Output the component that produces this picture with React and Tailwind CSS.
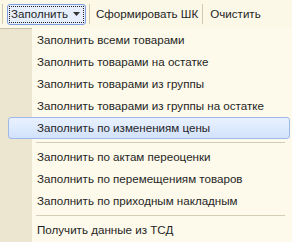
import React from 'react';

const groups = [
  [
    'Заполнить всеми товарами',
    'Заполнить товарами на остатке',
    'Заполнить товарами из группы',
    'Заполнить товарами из группы на остатке',
    'Заполнить по изменениям цены',
  ],
  [
    'Заполнить по актам переоценки',
    'Заполнить по перемещениям товаров',
    'Заполнить по приходным накладным',
  ],
  ['Получить данные из ТСД'],
];

const active = 'Заполнить по изменениям цены';

const Item = ({ label }) => {
  const isActive = label === active;
  return (
    <div className="relative flex h-[22px] items-center">
      <div className="h-full w-[32px] shrink-0 bg-[#ece6d1]" />
      {isActive && (
        <div className="absolute left-[8px] right-[2px] top-0 h-[22px] rounded-[3px] border border-[#9fb8ea] bg-gradient-to-b from-[#e9f1fe] to-[#d2e2fc]" />
      )}
      <span className="relative pl-[5px] text-[#1f1f1f]">{label}</span>
    </div>
  );
};

const Separator = () => (
  <div className="flex h-[7px]">
    <div className="h-full w-[32px] shrink-0 bg-[#ece6d1]" />
    <div className="flex flex-1 items-center pl-[4px] pr-[7px]">
      <div className="h-px w-full bg-[#d3cdb7]" />
    </div>
  </div>
);

export default function App() {
  return (
    <div
      className="h-[242px] w-[292px] overflow-hidden bg-[#fdfaeb] text-[11.6px] leading-none"
      style={{ fontFamily: '"Liberation Sans", Arial, sans-serif' }}
    >
      <div className="flex h-[28px] items-center bg-[#fbf8e8] pl-[2px]">
        <div className="h-[20px] w-px bg-[#cfc9b2]" />
        <div className="ml-[4px] flex h-[21px] items-center rounded-[3px] border border-[#7f9de0] bg-[#e8effc] px-[1px]">
          <div className="flex h-[17px] items-center gap-[5px] border border-dotted border-[#222] pl-[1px] pr-[3px] text-[#1f1f1f]">
            <span>Заполнить</span>
            <svg width="7" height="4" viewBox="0 0 7 4">
              <path d="M0 0h7L3.5 4z" fill="#333" />
            </svg>
          </div>
        </div>
        <div className="ml-[3px] h-[20px] w-px bg-[#cfc9b2]" />
        <span className="ml-[6px] text-[#1f1f1f]">Сформировать ШК</span>
        <div className="ml-[4px] h-[20px] w-px bg-[#cfc9b2]" />
        <span className="ml-[7px] text-[#1f1f1f]">Очистить</span>
      </div>
      <div className="flex flex-col">
        <div className="flex h-[1px]">
          <div className="w-[32px] bg-[#c6c0a9]" />
        </div>
        {groups.map((g, gi) => (
          <React.Fragment key={gi}>
            {gi > 0 && <Separator />}
            {g.map((label) => (
              <Item key={label} label={label} />
            ))}
          </React.Fragment>
        ))}
        <div className="flex h-[20px]">
          <div className="w-[32px] bg-[#ece6d1]" />
        </div>
      </div>
    </div>
  );
}
